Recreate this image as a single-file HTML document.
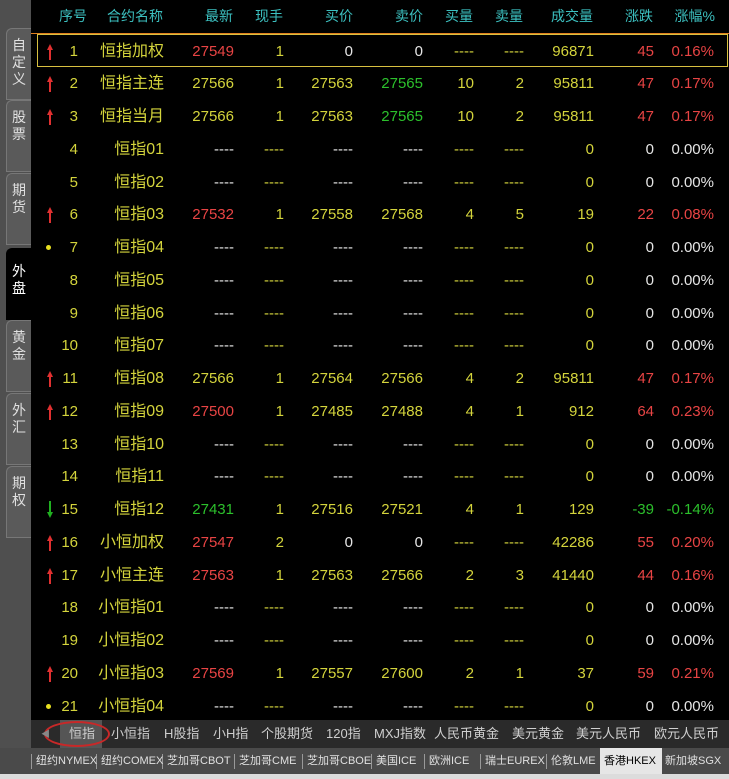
<!DOCTYPE html>
<html><head><meta charset="utf-8"><style>
*{margin:0;padding:0;box-sizing:border-box}
body{width:729px;height:779px;background:#4f4f4f;overflow:hidden;position:relative;font-family:"Liberation Sans","Noto Sans CJK SC",sans-serif}
#main{position:absolute;left:31px;top:0;width:698px;height:720px;background:#000}
.c{position:absolute;white-space:nowrap;font-size:15px;line-height:33px;height:33px}
.h{color:#3cc0c0;font-size:14px;line-height:32px}
.y{color:#d4d43c}.r{color:#e84444}.g{color:#2cc02c}.w{color:#e6e6e6}
.tab{position:absolute;left:6px;width:25px;background:#5a5a5a;border:1px solid #777;border-right:none;border-radius:6px 0 0 0;color:#e0e0e0;font-size:14px;line-height:17px;text-align:center;padding-top:8px;font-family:"Noto Sans CJK SC",sans-serif}
.tab.a{background:#000;border-color:#000;color:#fff}
#b1{position:absolute;left:31px;top:720px;width:698px;height:28px;background:#2a2a2a;color:#cfcfcf;font-size:13px;line-height:28px}
#b2{position:absolute;left:0;top:748px;width:729px;height:26px;background:#4a4a4a;color:#e0e0e0;font-size:11px;line-height:26px}
.bi{position:absolute;top:0;white-space:nowrap}
#b3{position:absolute;left:0;top:774px;width:729px;height:5px;background:#dcdcdc}
.arr{position:absolute;width:2px;height:16px}
.sep{position:absolute;top:6px;width:1px;height:15px;background:#999}
</style></head><body>
<div class="tab" style="top:28px;height:72px">自<br>定<br>义</div>
<div class="tab" style="top:100px;height:72px">股<br>票</div>
<div class="tab" style="top:173px;height:72px">期<br>货</div>
<div class="tab" style="top:320px;height:72px">黄<br>金</div>
<div class="tab" style="top:393px;height:72px">外<br>汇</div>
<div class="tab" style="top:466px;height:72px">期<br>权</div>
<div id="main"></div>
<div class="tab a" style="top:248px;height:72px;padding-top:14px">外<br>盘</div>
<div style="position:absolute;left:31px;top:33px;width:698px;height:1px;background:#e08020"></div>
<div style="position:absolute;left:37px;top:34px;width:691px;height:33px;border:1px solid #d8c040"></div>
<div id="rows"></div>
<div id="b1"><div style="position:absolute;left:29px;top:0;width:42px;height:28px;background:#555"></div>
<div style="position:absolute;left:13px;top:1px;width:66px;height:26px;border:2px solid #c82828;border-radius:50%"></div>
<span class="bi" style="left:10px;color:#888;font-size:9px">◀</span>
<span class="bi" style="left:38px">恒指</span><span class="bi" style="left:80px">小恒指</span><span class="bi" style="left:133px">H股指</span><span class="bi" style="left:182px">小H指</span><span class="bi" style="left:230px">个股期货</span><span class="bi" style="left:295px">120指</span><span class="bi" style="left:343px">MXJ指数</span><span class="bi" style="left:403px">人民币黄金</span><span class="bi" style="left:481px">美元黄金</span><span class="bi" style="left:545px">美元人民币</span><span class="bi" style="left:623px">欧元人民币</span></div>
<div id="b2"><div style="position:absolute;left:600px;top:0;width:62px;height:26px;background:#e6e6e6"></div>
<div class="sep" style="left:31px"></div><div class="sep" style="left:96px"></div><div class="sep" style="left:162px"></div><div class="sep" style="left:234px"></div><div class="sep" style="left:302px"></div><div class="sep" style="left:371px"></div><div class="sep" style="left:424px"></div><div class="sep" style="left:480px"></div><div class="sep" style="left:546px"></div>
<span class="bi" style="left:36px">纽约NYMEX</span><span class="bi" style="left:101px">纽约COMEX</span><span class="bi" style="left:167px">芝加哥CBOT</span><span class="bi" style="left:239px">芝加哥CME</span><span class="bi" style="left:307px">芝加哥CBOE</span><span class="bi" style="left:376px">美国ICE</span><span class="bi" style="left:429px">欧洲ICE</span><span class="bi" style="left:485px">瑞士EUREX</span><span class="bi" style="left:551px">伦敦LME</span><span class="bi" style="left:604px;color:#000">香港HKEX</span><span class="bi" style="left:665px">新加坡SGX</span></div>
<div id="b3"></div>
<script>
var R=document.getElementById('rows'),h='';
var hd=[['序号',87],['合约名称',163],['最新',233],['现手',283],['买价',353],['卖价',423],['买量',473],['卖量',523],['成交量',593],['涨跌',653],['涨幅%',715]];
hd.forEach(function(a){h+='<div class="c h" style="right:'+(729-a[1])+'px;top:0">'+a[0]+'</div>'});
var rt=[78,164,234,284,353,423,474,524,594,654,714];
var D='----';
var rows=[
['u','恒指加权','r27549','y1','w0','w0','y'+D,'y'+D,'y96871','r45','r0.16%'],
['u','恒指主连','y27566','y1','y27563','g27565','y10','y2','y95811','r47','r0.17%'],
['u','恒指当月','y27566','y1','y27563','g27565','y10','y2','y95811','r47','r0.17%']];
function empty(m,n){return [m,n,'w'+D,'y'+D,'w'+D,'w'+D,'y'+D,'y'+D,'y0','w0','w0.00%']}
rows.push(empty('','恒指01'),empty('','恒指02'),
['u','恒指03','r27532','y1','y27558','y27568','y4','y5','y19','r22','r0.08%'],
empty('d','恒指04'),empty('','恒指05'),empty('','恒指06'),empty('','恒指07'),
['u','恒指08','y27566','y1','y27564','y27566','y4','y2','y95811','r47','r0.17%'],
['u','恒指09','r27500','y1','y27485','y27488','y4','y1','y912','r64','r0.23%'],
empty('','恒指10'),empty('','恒指11'),
['n','恒指12','g27431','y1','y27516','y27521','y4','y1','y129','g-39','g-0.14%'],
['u','小恒加权','r27547','y2','w0','w0','y'+D,'y'+D,'y42286','r55','r0.20%'],
['u','小恒主连','r27563','y1','y27563','y27566','y2','y3','y41440','r44','r0.16%'],
empty('','小恒指01'),empty('','小恒指02'),
['u','小恒指03','r27569','y1','y27557','y27600','y2','y1','y37','r59','r0.21%'],
empty('d','小恒指04'));
rows.forEach(function(r,k){var t=34.5+k*32.75;
 if(r[0]=='u')h+='<div style="position:absolute;left:47px;top:'+(t+9)+'px;width:0;height:0;border-left:3px solid transparent;border-right:3px solid transparent;border-bottom:6px solid #e03030"></div><div class="arr" style="left:49px;top:'+(t+13)+'px;height:12px;background:#e03030"></div>';
 if(r[0]=='n')h+='<div class="arr" style="left:49px;top:'+(t+8)+'px;height:12px;background:#20b020"></div><div style="position:absolute;left:47px;top:'+(t+19)+'px;width:0;height:0;border-left:3px solid transparent;border-right:3px solid transparent;border-top:6px solid #20b020"></div>';
 if(r[0]=='d')h+='<div style="position:absolute;left:46px;top:'+(t+14)+'px;width:5px;height:5px;border-radius:50%;background:#e8e020"></div>';
 h+='<div class="c y" style="right:'+(729-rt[0])+'px;top:'+t+'px">'+(k+1)+'</div>';
 h+='<div class="c y" style="right:'+(729-rt[1])+'px;top:'+t+'px;font-size:16px">'+r[1]+'</div>';
 for(var j=2;j<11;j++)h+='<div class="c '+r[j][0]+'" style="right:'+(729-rt[j])+'px;top:'+t+'px">'+r[j].slice(1)+'</div>';
});
R.innerHTML=h;
</script>
</body></html>
